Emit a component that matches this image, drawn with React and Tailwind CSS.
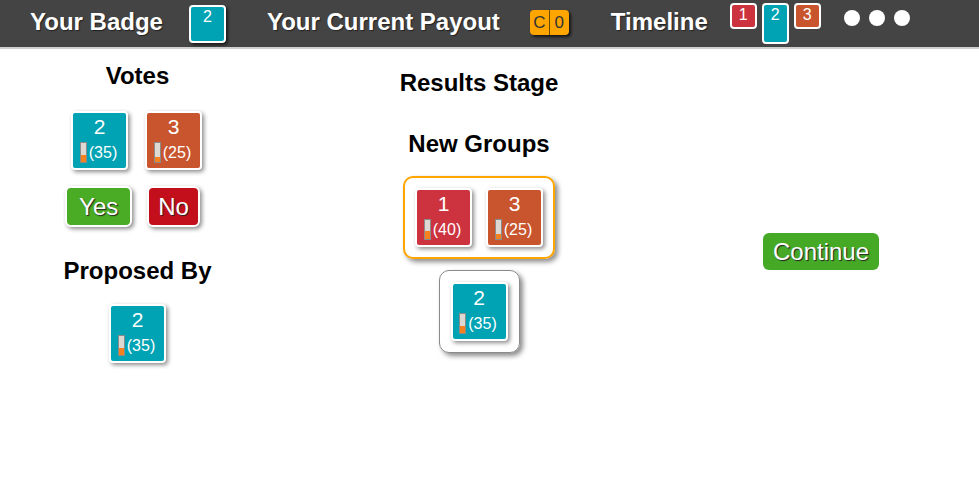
const COLORS = {
  1: "bg-[#cc333f]",
  2: "bg-[#00a3b3]",
  3: "bg-[#c8552e]",
};

const Battery = ({ value }) => (
  <span className="relative shrink-0 block w-[7px] h-[21px] bg-[#ddd8d2] border border-[#8a8a8a]">
    <span
      className="absolute left-0 right-0 bottom-0 bg-[#f5821f]"
      style={{ height: `${Math.round(value / 5)}px` }}
    />
  </span>
);

const Card = ({ id, value }) => (
  <div
    className={`w-[57px] h-[59px] border-2 border-white rounded-[4px] ${COLORS[id]} shadow-[2px_2px_4px_rgba(0,0,0,0.45)] flex flex-col items-center text-white`}
  >
    <div className="pt-[3px] text-[21px] leading-[21px]">{id}</div>
    <div className="mt-[5px] flex items-center gap-[2px] -ml-[2px]">
      <Battery value={value} />
      <span className="text-[16px] leading-[21px] whitespace-nowrap">({value})</span>
    </div>
  </div>
);

const Heading = ({ children, className = "" }) => (
  <h2 className={`text-[24px] leading-[28px] font-bold text-black text-center ${className}`}>
    {children}
  </h2>
);

const shadowText = "[text-shadow:1px_1px_1px_#222]";

export default function App() {
  return (
    <div className="w-[979px] h-[488px] bg-white overflow-hidden font-['Liberation_Sans',Arial,sans-serif]">
      <header className="h-[49px] bg-[#444444] border-b-2 border-[#cfcfcf] flex items-start text-white">
        <span className={`ml-[30px] mt-[8px] text-[24px] leading-[28px] font-bold ${shadowText}`}>
          Your Badge
        </span>
        <div className="ml-[26px] mt-[5px] w-[37px] h-[38px] border-2 border-white rounded-[4px] bg-[#00a3b3] shadow-[2px_2px_3px_rgba(0,0,0,0.6)] flex justify-center">
          <span className="text-[16px] leading-[16px] pt-[2px]">2</span>
        </div>
        <span className={`ml-[41px] mt-[8px] text-[24px] leading-[28px] font-bold ${shadowText}`}>
          Your Current Payout
        </span>
        <div className="ml-[30px] mt-[10px] w-[39px] h-[25px] rounded-[4px] bg-[#ffa500] shadow-[2px_2px_3px_rgba(0,0,0,0.7)] flex text-[#333] text-[17px] leading-[25px]">
          <span className="flex-1 text-center border-r border-[#6a4a00]">C</span>
          <span className="flex-1 text-center">0</span>
        </div>
        <span className={`ml-[42px] mt-[8px] text-[24px] leading-[28px] font-bold ${shadowText}`}>
          Timeline
        </span>
        <div className="ml-[22px] mt-[3px] flex items-start gap-[5px]">
          <div className="w-[27px] h-[26px] border-2 border-white rounded-[4px] bg-[#cc333f] flex justify-center">
            <span className="text-[16px] leading-[16px] pt-[2px]">1</span>
          </div>
          <div className="w-[27px] h-[41px] border-2 border-white rounded-[4px] bg-[#00a3b3] flex justify-center">
            <span className="text-[16px] leading-[16px] pt-[2px]">2</span>
          </div>
          <div className="w-[27px] h-[26px] border-2 border-white rounded-[4px] bg-[#c8552e] flex justify-center">
            <span className="text-[16px] leading-[16px] pt-[2px]">3</span>
          </div>
        </div>
        <div className="ml-[23px] mt-[10px] flex gap-[9px]">
          <span className="w-[16px] h-[16px] rounded-full bg-white" />
          <span className="w-[16px] h-[16px] rounded-full bg-white" />
          <span className="w-[16px] h-[16px] rounded-full bg-white" />
        </div>
      </header>

      <main className="grid grid-cols-[275px_408px_1fr]">
        <section className="flex flex-col items-center">
          <Heading className="mt-[13px]">Votes</Heading>
          <div className="mt-[21px] flex gap-[17px] -ml-[2px]">
            <Card id={2} value={35} />
            <Card id={3} value={25} />
          </div>
          <div className="mt-[16px] flex gap-[15px] -ml-[10px]">
            <button
              className={`h-[41px] px-[12px] rounded-[6px] border-2 border-white bg-[#4aab24] text-white text-[24px] leading-[24px] shadow-[2px_2px_4px_rgba(0,0,0,0.45)] ${shadowText}`}
            >
              Yes
            </button>
            <button
              className={`h-[41px] px-[9px] rounded-[6px] border-2 border-white bg-[#c30f1b] text-white text-[24px] leading-[24px] shadow-[2px_2px_4px_rgba(0,0,0,0.45)] ${shadowText}`}
            >
              No
            </button>
          </div>
          <Heading className="mt-[30px]">Proposed By</Heading>
          <div className="mt-[19px]">
            <Card id={2} value={35} />
          </div>
        </section>

        <section className="flex flex-col items-center">
          <Heading className="mt-[20px]">Results Stage</Heading>
          <Heading className="mt-[33px]">New Groups</Heading>
          <div className="mt-[18px] p-[10px] border-2 border-[#ffa500] rounded-[10px] shadow-[3px_3px_5px_rgba(0,0,0,0.45)] flex gap-[14px]">
            <Card id={1} value={40} />
            <Card id={3} value={25} />
          </div>
          <div className="mt-[11px] px-[11px] py-[11px] border border-[#8a8a8a] rounded-[10px] shadow-[3px_3px_5px_rgba(0,0,0,0.45)]">
            <Card id={2} value={35} />
          </div>
        </section>

        <section className="flex flex-col items-center pr-[20px]">
          <button
            className={`mt-[184px] h-[37px] px-[10px] rounded-[6px] bg-[#46a926] text-white text-[24px] leading-[24px] ${shadowText}`}
          >
            Continue
          </button>
        </section>
      </main>
    </div>
  );
}
